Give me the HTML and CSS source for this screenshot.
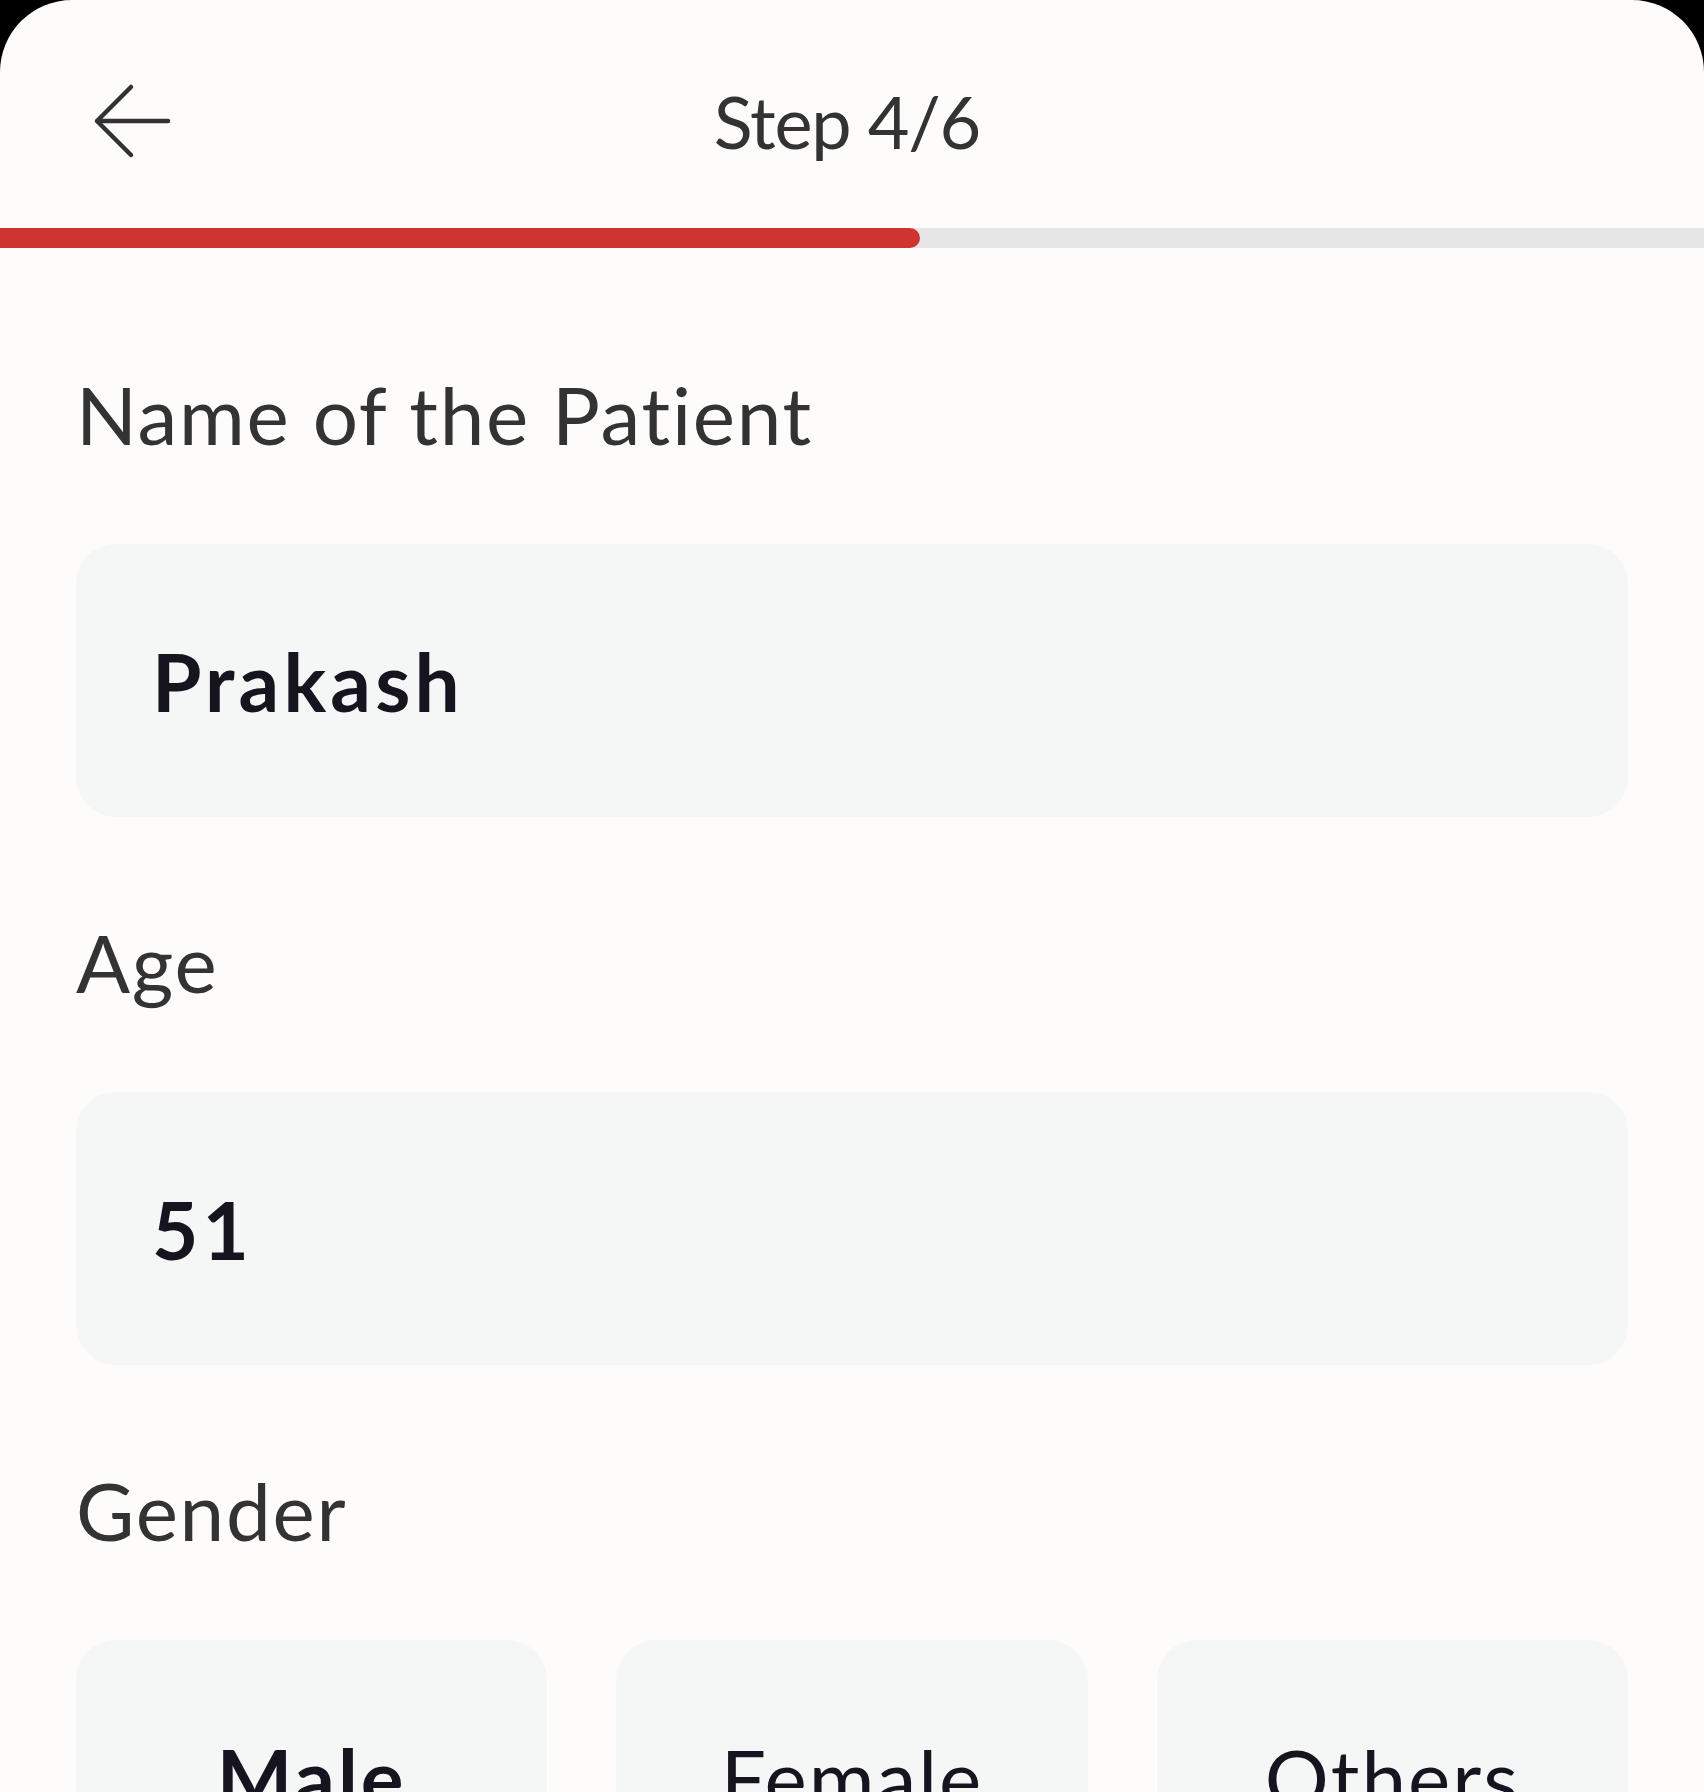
FILE: index.html
```html
<!DOCTYPE html>
<html lang="en">
<head>
<meta charset="utf-8">
<title>Step 4/6</title>
<link rel="stylesheet" href="styles.css">
</head>
<body>
<div class="screen">
  <header class="header">
    <div class="header-left">
      <svg class="back" width="80" height="80" viewBox="0 0 80 80" aria-label="Back">
        <path d="M76 40H5M5 40L39 6M5 40L39 74" fill="none" stroke="#333333" stroke-width="4.5" stroke-linecap="round" stroke-linejoin="round"/>
      </svg>
    </div>
    <div class="title">Step 4/6</div>
    <div class="header-right"></div>
  </header>
  <div class="progress"><div class="progress-fill"></div></div>

  <main class="form">
    <div class="label label-first">Name of the Patient</div>
    <div class="field"><span class="value">Prakash</span></div>

    <div class="label">Age</div>
    <div class="field"><span class="value">51</span></div>

    <div class="label">Gender</div>
    <div class="options">
      <div class="option selected">Male</div>
      <div class="option">Female</div>
      <div class="option">Others</div>
    </div>
  </main>
</div>
</body>
</html>
```

FILE: styles.css
```css
html, body {
  margin: 0;
  padding: 0;
  background: #000000;
}

.screen {
  background: #FEFBFB;
  border-radius: 72px 72px 0 0;
  min-height: 1792px;
  overflow: hidden;
  font-family: "Lato", "Noto Sans", sans-serif;
  font-variant-ligatures: none;
}

.header {
  height: 214px;
  padding-top: 14px;
  display: grid;
  grid-template-columns: 1fr auto 1fr;
  align-items: center;
}

.header-left {
  display: flex;
  align-items: center;
  padding-left: 92px;
}

.back {
  display: block;
}

.title {
  font-size: 72px;
  line-height: 72px;
  color: #333333;
  letter-spacing: -1.2px;
  padding-right: 10px;
}

.progress {
  height: 20px;
  background: #E6E6E6;
}

.progress-fill {
  width: 920px;
  height: 20px;
  background: #CF3430;
  border-radius: 0 10px 10px 0;
}

.form {
  padding: 0 76px;
}

.label {
  font-size: 80px;
  line-height: 80px;
  color: #333333;
  letter-spacing: 1.7px;
  margin-top: 105px;
  margin-bottom: 90px;
}

.label-first {
  margin-top: 126px;
}

.field {
  height: 273px;
  background: #F5F6F6;
  border-radius: 40px;
  display: flex;
  align-items: center;
  padding-left: 76px;
}

.value {
  font-size: 80px;
  line-height: 80px;
  font-weight: 700;
  letter-spacing: 4.2px;
  color: #16141F;
}

.options {
  display: grid;
  grid-template-columns: repeat(3, 1fr);
  column-gap: 69px;
}

.option {
  height: 273px;
  background: #F5F6F6;
  border-radius: 40px;
  display: flex;
  align-items: center;
  justify-content: center;
  font-size: 80px;
  line-height: 80px;
  letter-spacing: 2px;
  color: #16141F;
}

.option.selected {
  font-weight: 700;
  letter-spacing: 3px;
}
```
